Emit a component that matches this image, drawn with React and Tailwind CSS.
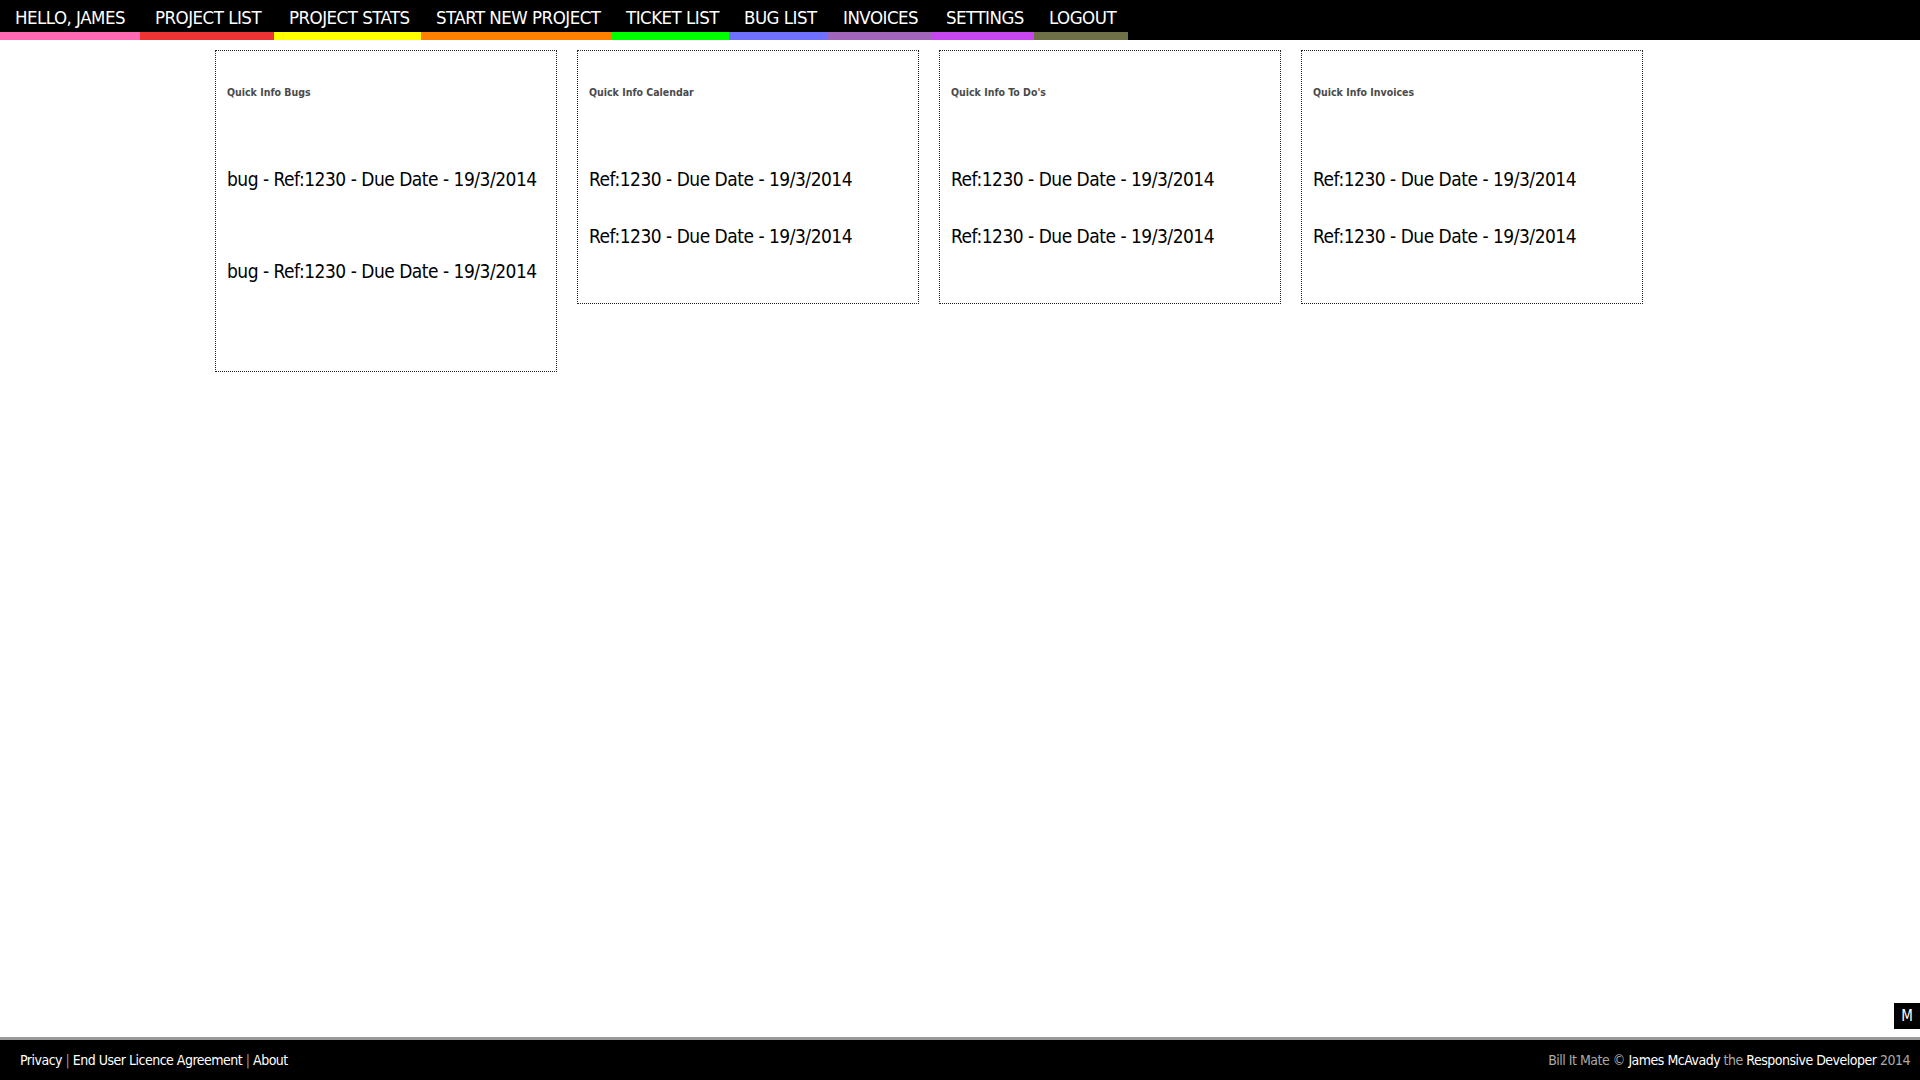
import React from "react";

const navItems = [
  { label: "HELLO, JAMES", w: "w-[140px]", stripe: "border-[#ff69b4]" },
  { label: "PROJECT LIST", w: "w-[134px]", stripe: "border-[#ee3333]" },
  { label: "PROJECT STATS", w: "w-[147px]", stripe: "border-[#ffff00]" },
  { label: "START NEW PROJECT", w: "w-[190px]", stripe: "border-[#ff8000]" },
  { label: "TICKET LIST", w: "w-[118px]", stripe: "border-[#00ff00]" },
  { label: "BUG LIST", w: "w-[99px]", stripe: "border-[#7070ff]" },
  { label: "INVOICES", w: "w-[103px]", stripe: "border-[#a066bb]" },
  { label: "SETTINGS", w: "w-[103px]", stripe: "border-[#c646f0]" },
  { label: "LOGOUT", w: "w-[94px]", stripe: "border-[#707048]" },
];

const item = "Ref:1230 - Due Date - 19/3/2014";

const boxes = [
  { title: "Quick Info Bugs", rows: ["bug - " + item, "bug - " + item], wide: true },
  { title: "Quick Info Calendar", rows: [item, item] },
  { title: "Quick Info To Do's", rows: [item, item] },
  { title: "Quick Info Invoices", rows: [item, item] },
];

const narrow = "font-['DejaVu_Sans_Condensed','DejaVu_Sans',sans-serif]";

function QuickBox({ title, rows, wide }) {
  return (
    <div className="w-[342px] border border-dotted border-[#222] px-[11px] pt-[33px] pb-[38px]">
      <h3 className="text-[10.5px] leading-[16px] font-bold text-[#4a4a4a]">{title}</h3>
      <ul className={wide ? "mt-[51px] flex flex-col gap-[35px] pb-[33px]" : "mt-[51px] flex flex-col"}>
        {rows.map((r, i) => (
          <li key={i} className="h-[57px] leading-[57px] text-[19px] tracking-[-0.5px] text-black whitespace-nowrap">
            {r}
          </li>
        ))}
      </ul>
    </div>
  );
}

export default function App() {
  return (
    <div className={`min-h-screen flex flex-col bg-white ${narrow}`}>
      {/* Top nav */}
      <nav className="bg-black h-[40px] flex">
        {navItems.map((n) => (
          <a
            key={n.label}
            href="#"
            className={`${n.w} ${n.stripe} border-b-[8px] h-[40px] pl-[15px] pt-[6px] text-white text-[18.5px] tracking-[-0.5px] leading-[24px] whitespace-nowrap`}
          >
            {n.label}
          </a>
        ))}
      </nav>

      {/* Quick info boxes */}
      <main className="flex items-start gap-[20px] pl-[215px] pt-[10px]">
        {boxes.map((b) => (
          <QuickBox key={b.title} {...b} />
        ))}
      </main>

      {/* M badge */}
      <div className="fixed right-0 bottom-[51px] w-[26px] h-[26px] bg-black text-white text-[15px] flex items-center justify-center">
        M
      </div>

      {/* Footer */}
      <footer className="mt-auto h-[43px] border-t-[3px] border-[#999] bg-black flex items-center justify-between pl-[20px] pr-[10px] text-[14px] tracking-[-0.5px]">
        <div className="text-white">
          Privacy <span className="text-[#999]">|</span> End User Licence Agreement{" "}
          <span className="text-[#999]">|</span> About
        </div>
        <div className="text-[#aaa]">
          Bill It Mate © <span className="text-white">James McAvady</span> the{" "}
          <span className="text-white">Responsive Developer</span> 2014
        </div>
      </footer>
    </div>
  );
}
